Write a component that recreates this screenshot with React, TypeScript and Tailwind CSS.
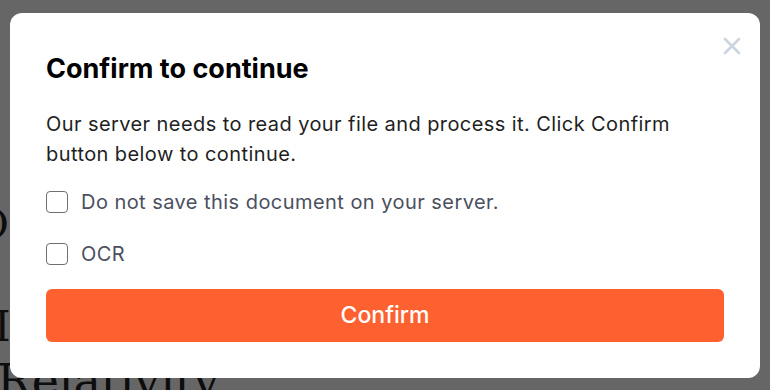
import React from "react";

export default function App() {
  return (
    <div className="relative w-[770px] h-[390px] overflow-hidden bg-white" style={{ fontFamily: "Inter, 'Noto Sans', sans-serif" }}>
      {/* background page */}
      <div className="absolute inset-0 text-[#222]" style={{ fontFamily: "'DejaVu Serif', serif" }}>
        <div className="absolute left-[-24px] top-[204px] text-[40px] leading-none">O</div>
        <div className="absolute left-[-6px] top-[306px] text-[42px] leading-none">I</div>
        <div className="absolute left-[-3px] top-[358px] text-[46px] leading-none">Relativity</div>
      </div>
      {/* overlay */}
      <div className="absolute inset-0 bg-black/60 flex items-center justify-center">
        <div className="relative w-[750px] h-[365px] bg-white rounded-[12px] px-9 pt-10 pb-9 flex flex-col">
          <button className="absolute right-[19px] top-[24px] w-[18px] h-[18px] text-[#cbd5e1]">
            <svg viewBox="0 0 18 18" width="18" height="18" fill="none" stroke="currentColor" strokeWidth="2.6" strokeLinecap="round">
              <path d="M2 2L16 16M16 2L2 16" />
            </svg>
          </button>
          <h2 className="text-[27px] leading-[32px] font-bold text-black">Confirm to continue</h2>
          <p className="mt-6 text-[20px] leading-[30px] tracking-[0.42px] text-[#1f1f1f]">
            Our server needs to read your file and process it. Click Confirm button below to continue.
          </p>
          <label className="mt-[18px] flex items-center gap-[13px] h-[30px]">
            <span className="w-[22px] h-[22px] rounded-[4px] border-[1.5px] border-[#707070] bg-white" />
            <span className="text-[20px] tracking-[0.45px] text-[#4a5060]">Do not save this document on your server.</span>
          </label>
          <label className="mt-[22px] flex items-center gap-[13px] h-[30px]">
            <span className="w-[22px] h-[22px] rounded-[4px] border-[1.5px] border-[#707070] bg-white" />
            <span className="text-[20px] tracking-[0.45px] text-[#4a5060]">OCR</span>
          </label>
          <button className="mt-[20px] h-[53px] w-full rounded-[6px] bg-[#fe612f] text-white text-[23px] font-medium">
            Confirm
          </button>
        </div>
      </div>
    </div>
  );
}
